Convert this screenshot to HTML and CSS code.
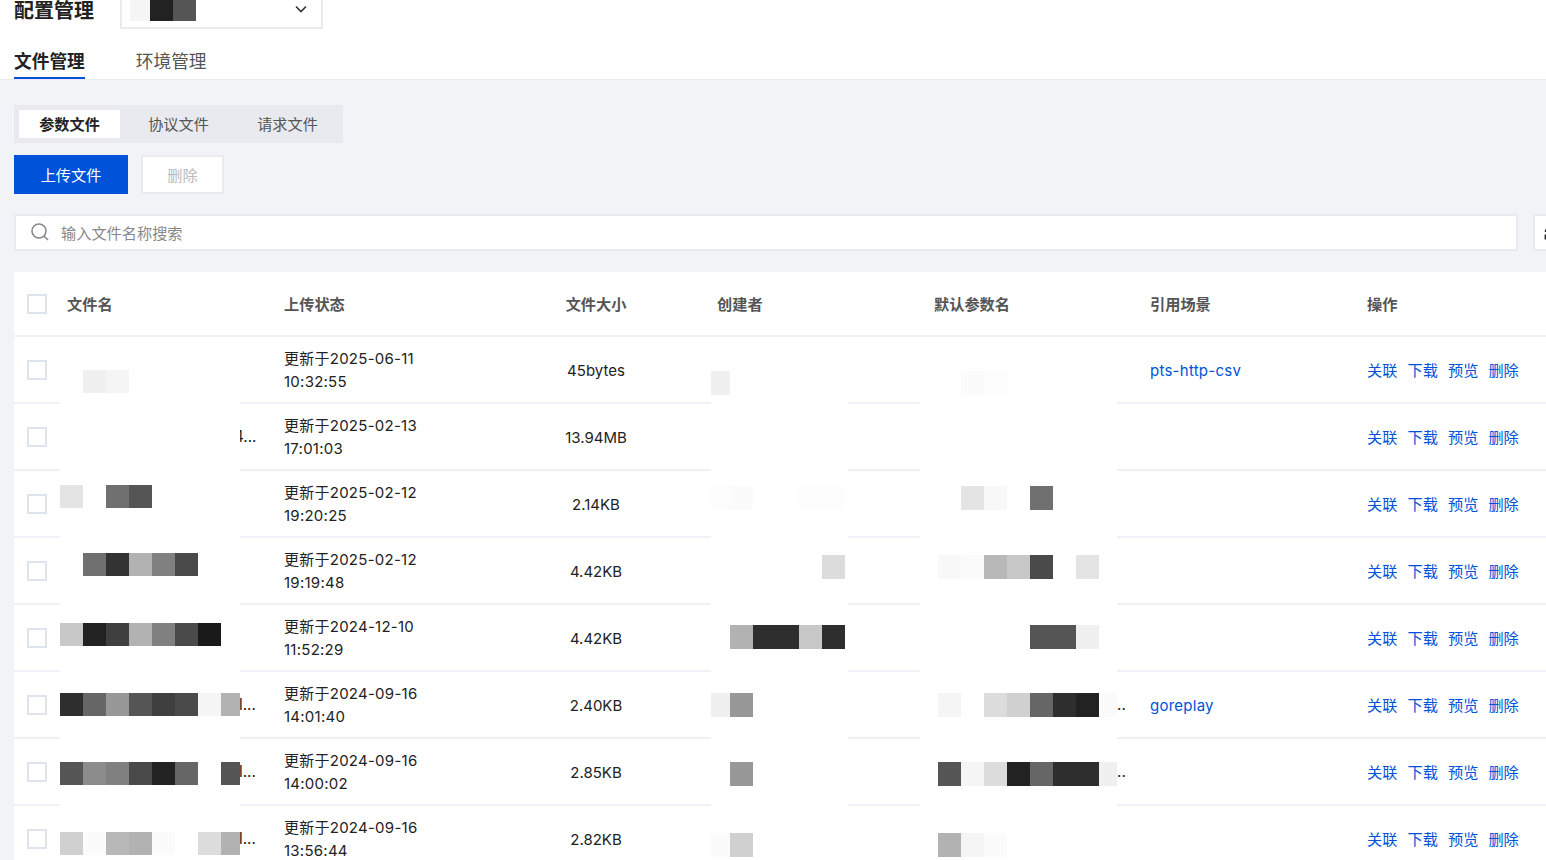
FILE: index.html
```html
<!DOCTYPE html>
<html lang="zh-CN">
<head>
    <meta charset="UTF-8">
    <meta name="viewport" content="width=device-width, initial-scale=1.0">
    <title>配置管理</title>
    <link rel="stylesheet" href="styles.css">
</head>
<body>
    <div class="page-head">
        <div class="topbar">
            <div class="page-title">配置管理</div>
            <div class="project-select">
                <div class="mosaic"><i class="t-f5 px-short"></i><i class="t-22"></i><i class="t-55"></i></div>
                <svg class="chevron" width="12" height="8" viewBox="0 0 12 8"><path d="M1 1.5l5 5 5-5" fill="none" stroke="#333" stroke-width="1.6"/></svg>
            </div>
        </div>
        <div class="tabs">
            <a class="tab active">文件管理</a>
            <a class="tab">环境管理</a>
        </div>
    </div>

    <div class="main">
        <div class="segment">
            <button class="segment-item active">参数文件</button>
            <button class="segment-item">协议文件</button>
            <button class="segment-item">请求文件</button>
        </div>

        <div class="actions">
            <button class="btn btn-primary">上传文件</button>
            <button class="btn btn-disabled" disabled>删除</button>
        </div>

        <div class="search-row">
            <div class="search-box">
                <svg width="20" height="20" viewBox="0 0 20 20"><circle cx="9" cy="9" r="7" fill="none" stroke="#888" stroke-width="1.6"/><path d="M14 14l4 4" stroke="#888" stroke-width="1.6"/></svg>
                <span class="search-placeholder">输入文件名称搜索</span>
            </div>
            <button class="refresh-btn">
                <svg width="16" height="16" viewBox="0 0 16 16"><path d="M2.500 7a5.600 5.600 0 0 1 10-2.600M13.500 9a5.600 5.600 0 0 1-10 2.600" fill="none" stroke="#222" stroke-width="1.8"/><path d="M13.500 1.500v4h-4M2.500 14.500v-4h4" fill="none" stroke="#222" stroke-width="1.8"/></svg>
            </button>
        </div>

        <div class="table">
            <div class="row head-row">
                <div class="cell"><span class="checkbox"></span></div>
                <div class="cell span-2 head-pad">文件名</div>
                <div class="cell head-pad">上传状态</div>
                <div class="cell cell-center">文件大小</div>
                <div class="cell span-2 head-pad-creator">创建者</div>
                <div class="cell span-2 head-pad-wide">默认参数名</div>
                <div class="cell">引用场景</div>
                <div class="cell">操作</div>
            </div>

            <div class="row">
                <div class="cell"><span class="checkbox"></span></div>
                <div class="cell masked"><div class="mosaic top-33"><i></i><i class="t-f0"></i><i class="t-f5"></i></div></div>
                <div class="cell"></div>
                <div class="cell status">更新于2025-06-11<br>10:32:55</div>
                <div class="cell cell-center size">45bytes</div>
                <div class="cell masked"><div class="mosaic mosaic-tall shift-creator top-34"><i class="t-f0"></i></div></div>
                <div class="cell"></div>
                <div class="cell masked"><div class="mosaic mosaic-tall shift-default top-34"><i></i><i></i><i class="t-fb"></i><i class="t-fd"></i></div></div>
                <div class="cell"></div>
                <div class="cell"><a class="link link-name">pts-http-csv</a></div>
                <div class="cell ops"><a class="link">关联</a><a class="link">下载</a><a class="link">预览</a><a class="link">删除</a></div>
            </div>

            <div class="row">
                <div class="cell"><span class="checkbox"></span></div>
                <div class="cell masked"></div>
                <div class="cell"><span class="cut-wide">4...</span></div>
                <div class="cell status">更新于2025-02-13<br>17:01:03</div>
                <div class="cell cell-center size">13.94MB</div>
                <div class="cell masked"></div>
                <div class="cell"></div>
                <div class="cell masked"></div>
                <div class="cell"></div>
                <div class="cell"></div>
                <div class="cell ops"><a class="link">关联</a><a class="link">下载</a><a class="link">预览</a><a class="link">删除</a></div>
            </div>

            <div class="row">
                <div class="cell"><span class="checkbox"></span></div>
                <div class="cell masked"><div class="mosaic top-14"><i class="t-e4"></i><i></i><i class="t-70"></i><i class="t-55"></i></div></div>
                <div class="cell"></div>
                <div class="cell status">更新于2025-02-12<br>19:20:25</div>
                <div class="cell cell-center size">2.14KB</div>
                <div class="cell masked"><div class="mosaic mosaic-tall shift-creator top-15"><i class="t-fd"></i><i class="t-fb"></i><i></i><i></i><i class="t-fd"></i><i class="t-fd"></i></div></div>
                <div class="cell"></div>
                <div class="cell masked"><div class="mosaic mosaic-tall shift-default top-15"><i></i><i></i><i class="t-e4"></i><i class="t-f8"></i><i></i><i class="t-70"></i></div></div>
                <div class="cell"></div>
                <div class="cell"></div>
                <div class="cell ops"><a class="link">关联</a><a class="link">下载</a><a class="link">预览</a><a class="link">删除</a></div>
            </div>

            <div class="row">
                <div class="cell"><span class="checkbox"></span></div>
                <div class="cell masked"><div class="mosaic top-15"><i></i><i class="t-70"></i><i class="t-33"></i><i class="t-b2"></i><i class="t-80"></i><i class="t-4a"></i></div></div>
                <div class="cell"></div>
                <div class="cell status">更新于2025-02-12<br>19:19:48</div>
                <div class="cell cell-center size">4.42KB</div>
                <div class="cell masked"><div class="mosaic mosaic-tall shift-creator top-17"><i></i><i></i><i></i><i></i><i></i><i class="t-dc"></i></div></div>
                <div class="cell"></div>
                <div class="cell masked"><div class="mosaic mosaic-tall shift-default top-17"><i></i><i class="t-f8"></i><i class="t-fb"></i><i class="t-b8"></i><i class="t-c8"></i><i class="t-4a"></i><i></i><i class="t-e4"></i></div></div>
                <div class="cell"></div>
                <div class="cell"></div>
                <div class="cell ops"><a class="link">关联</a><a class="link">下载</a><a class="link">预览</a><a class="link">删除</a></div>
            </div>

            <div class="row">
                <div class="cell"><span class="checkbox"></span></div>
                <div class="cell masked"><div class="mosaic top-18"><i class="t-c8"></i><i class="t-22"></i><i class="t-3f"></i><i class="t-b2"></i><i class="t-80"></i><i class="t-4a"></i><i class="t-1a"></i></div></div>
                <div class="cell"></div>
                <div class="cell status">更新于2024-12-10<br>11:52:29</div>
                <div class="cell cell-center size">4.42KB</div>
                <div class="cell masked"><div class="mosaic mosaic-tall shift-creator top-20"><i></i><i class="t-b2"></i><i class="t-2e"></i><i class="t-2e"></i><i class="t-c8"></i><i class="t-2e"></i></div></div>
                <div class="cell"></div>
                <div class="cell masked"><div class="mosaic mosaic-tall shift-default top-20"><i></i><i></i><i></i><i></i><i></i><i class="t-55"></i><i class="t-55"></i><i class="t-f0"></i></div></div>
                <div class="cell"></div>
                <div class="cell"></div>
                <div class="cell ops"><a class="link">关联</a><a class="link">下载</a><a class="link">预览</a><a class="link">删除</a></div>
            </div>

            <div class="row">
                <div class="cell"><span class="checkbox"></span></div>
                <div class="cell masked"><div class="mosaic top-21"><i class="t-2e"></i><i class="t-66"></i><i class="t-98"></i><i class="t-55"></i><i class="t-3f"></i><i class="t-4a"></i><i class="t-f5"></i><i class="t-b2"></i></div></div>
                <div class="cell"><span class="cut">l...</span></div>
                <div class="cell status">更新于2024-09-16<br>14:01:40</div>
                <div class="cell cell-center size">2.40KB</div>
                <div class="cell masked"><div class="mosaic mosaic-tall shift-creator top-21"><i class="t-f0"></i><i class="t-98"></i></div></div>
                <div class="cell"></div>
                <div class="cell masked"><div class="mosaic mosaic-tall shift-default top-21"><i></i><i class="t-f5"></i><i></i><i class="t-dc"></i><i class="t-d0"></i><i class="t-66"></i><i class="t-2e"></i><i class="t-22"></i><i class="t-fb"></i></div></div>
                <div class="cell">..</div>
                <div class="cell"><a class="link link-name">goreplay</a></div>
                <div class="cell ops"><a class="link">关联</a><a class="link">下载</a><a class="link">预览</a><a class="link">删除</a></div>
            </div>

            <div class="row">
                <div class="cell"><span class="checkbox"></span></div>
                <div class="cell masked"><div class="mosaic top-23"><i class="t-55"></i><i class="t-8c"></i><i class="t-80"></i><i class="t-4a"></i><i class="t-22"></i><i class="t-66"></i><i></i><i class="t-55"></i></div></div>
                <div class="cell"><span class="cut">l...</span></div>
                <div class="cell status">更新于2024-09-16<br>14:00:02</div>
                <div class="cell cell-center size">2.85KB</div>
                <div class="cell masked"><div class="mosaic mosaic-tall shift-creator top-23"><i></i><i class="t-98"></i></div></div>
                <div class="cell"></div>
                <div class="cell masked"><div class="mosaic mosaic-tall shift-default top-23"><i></i><i class="t-55"></i><i class="t-f5"></i><i class="t-dc"></i><i class="t-22"></i><i class="t-66"></i><i class="t-2e"></i><i class="t-2e"></i><i class="t-f0"></i></div></div>
                <div class="cell">..</div>
                <div class="cell"></div>
                <div class="cell ops"><a class="link">关联</a><a class="link">下载</a><a class="link">预览</a><a class="link">删除</a></div>
            </div>

            <div class="row">
                <div class="cell"><span class="checkbox"></span></div>
                <div class="cell masked"><div class="mosaic top-26"><i class="t-d0"></i><i class="t-fb"></i><i class="t-b8"></i><i class="t-b2"></i><i class="t-fb"></i><i></i><i class="t-dc"></i><i class="t-b2"></i></div></div>
                <div class="cell"><span class="cut">l...</span></div>
                <div class="cell status">更新于2024-09-16<br>13:56:44</div>
                <div class="cell cell-center size">2.82KB</div>
                <div class="cell masked"><div class="mosaic mosaic-tall shift-creator top-27"><i class="t-fb"></i><i class="t-d0"></i></div></div>
                <div class="cell"></div>
                <div class="cell masked"><div class="mosaic mosaic-tall shift-default top-27"><i></i><i class="t-b2"></i><i class="t-f5"></i><i class="t-fb"></i></div></div>
                <div class="cell"></div>
                <div class="cell"></div>
                <div class="cell ops"><a class="link">关联</a><a class="link">下载</a><a class="link">预览</a><a class="link">删除</a></div>
            </div>
        </div>
    </div>
</body>
</html>
```

FILE: styles.css
```css
:root {
    --primary-color: #0052d9;
    --page-bg: #f1f3f7;
    --line-color: #eaebf0;
    --row-line: #f0f0f6;
    --dark-text-color: #222;
    --columns: 46px 180px 37px 204px 230px 137px 72px 197px 33px 217px 179px;
}

* {
    box-sizing: border-box;
}

html, body {
    height: 100%;
}

body {
    margin: 0;
    height: 860px;
    overflow: hidden;
    background: var(--page-bg);
    color: var(--dark-text-color);
    font-family: Inter, "Noto Sans CJK SC", sans-serif;
    font-size: 15.2px;
}

button {
    font-family: inherit;
    font-size: 15.2px;
    cursor: pointer;
}

/* top area */
.page-head {
    background: white;
    border-bottom: 1px solid var(--line-color);
}

.topbar {
    display: flex;
    height: 29px;
    padding-left: 14px;
}

.page-title {
    width: 106px;
    font-size: 20px;
    font-weight: 600;
    line-height: 22px;
}

.project-select {
    display: flex;
    justify-content: space-between;
    width: 203px;
    padding: 0 14px 0 8px;
    border: 2px solid var(--line-color);
    border-top: none;
}

.project-select .mosaic {
    height: 21px;
}

.project-select .px-short {
    width: 20px;
}

.chevron {
    margin-top: 5px;
}

.tabs {
    display: flex;
    gap: 51px;
    padding: 21px 0 0 14px;
}

.tab {
    padding-bottom: 3px;
    border-bottom: 2px solid transparent;
    font-size: 17.7px;
    line-height: 24px;
    color: #555;
}

.tab.active {
    font-weight: 600;
    color: var(--dark-text-color);
    border-bottom-color: var(--primary-color);
}

/* main area */
.main {
    padding: 25px 0 0 14px;
}

.segment {
    display: flex;
    width: 329px;
    height: 38px;
    padding: 5px;
    background: #e8eaf0;
}

.segment-item {
    flex: none;
    width: 109px;
    height: 28px;
    padding: 0 0 2px;
    border: none;
    background: none;
    color: #555;
}

.segment-item.active {
    width: 101px;
    margin-right: 4px;
    background: white;
    font-weight: 600;
    color: var(--dark-text-color);
}

.actions {
    display: flex;
    gap: 13px;
    margin-top: 12px;
}

.btn {
    height: 39px;
    border: 2px solid transparent;
    padding: 0 0 2px;
}

.btn-primary {
    width: 114px;
    background: var(--primary-color);
    color: white;
}

.btn-disabled {
    width: 83px;
    background: white;
    border-color: var(--line-color);
    color: #bbb;
    cursor: not-allowed;
}

.search-row {
    display: flex;
    gap: 15px;
    margin-top: 20px;
}

.search-box {
    display: flex;
    align-items: center;
    gap: 11px;
    flex: none;
    width: 1504px;
    height: 37px;
    padding: 0 0 1px 14px;
    background: white;
    border: 2px solid var(--line-color);
}

.search-placeholder {
    color: #888;
    padding-bottom: 1px;
}

.refresh-btn {
    flex: none;
    width: 37px;
    height: 37px;
    padding: 0 0 0 8px;
    text-align: left;
    background: white;
    border: 2px solid var(--line-color);
}

.refresh-btn svg {
    display: block;
}

/* table */
.table {
    margin-top: 21px;
    background: white;
}

.row {
    display: grid;
    grid-template-columns: var(--columns);
    height: 67px;
}

.head-row {
    height: 65px;
    font-weight: 600;
    color: #555;
}

.cell {
    display: flex;
    align-items: center;
    min-width: 0;
    border-bottom: 2px solid var(--row-line);
}

.cell:first-child {
    padding-left: 13px;
}

.head-row .cell {
    padding-bottom: 2px;
}

.head-row .cell:first-child {
    padding-bottom: 0;
}

.span-2 {
    grid-column: span 2;
}

.head-pad {
    padding-left: 7px;
}

.head-pad-creator {
    padding-left: 6px;
}

.head-pad-wide {
    padding-left: 14px;
}

.cell-center {
    justify-content: center;
}

.status {
    padding-left: 7px;
    font-size: 15px;
    line-height: 23px;
    letter-spacing: 0.25px;
}

.size {
    padding-top: 2px;
    font-size: 15px;
}

.checkbox {
    width: 20px;
    height: 20px;
    background: white;
    border: 2px solid #dfe3ee;
}

.link {
    color: var(--primary-color);
    cursor: pointer;
}

.link-name {
    padding-top: 1px;
    font-size: 15px;
    letter-spacing: 0.25px;
}

.ops {
    gap: 10.1px;
    padding-bottom: 2px;
}

/* blurred-out values, these sit on top of the cut off text next to them */
.masked {
    position: relative;
    z-index: 1;
    align-items: flex-start;
    overflow: hidden;
    background: white;
    border-bottom-color: white;
}

.cut {
    margin-left: -1px;
}

.cut-wide {
    margin-left: -6px;
}

.mosaic {
    display: flex;
    height: 23px;
}

.mosaic-tall {
    height: 24px;
}

.mosaic i {
    flex: none;
    width: 23px;
}

.shift-creator {
    margin-left: -4px;
}

.shift-default {
    margin-left: -5px;
}

.top-14 { margin-top: 14px; }
.top-15 { margin-top: 15px; }
.top-17 { margin-top: 17px; }
.top-18 { margin-top: 18px; }
.top-20 { margin-top: 20px; }
.top-21 { margin-top: 21px; }
.top-23 { margin-top: 23px; }
.top-26 { margin-top: 26px; }
.top-27 { margin-top: 27px; }
.top-33 { margin-top: 33px; }
.top-34 { margin-top: 34px; }

.t-1a { background: #1a1a1a; }
.t-22 { background: #222; }
.t-2e { background: #2e2e2e; }
.t-33 { background: #333; }
.t-3f { background: #3f3f3f; }
.t-4a { background: #4a4a4a; }
.t-55 { background: #555; }
.t-66 { background: #666; }
.t-70 { background: #707070; }
.t-80 { background: #808080; }
.t-8c { background: #8c8c8c; }
.t-98 { background: #989898; }
.t-b2 { background: #b2b2b2; }
.t-b8 { background: #b8b8b8; }
.t-c8 { background: #c8c8c8; }
.t-d0 { background: #d0d0d0; }
.t-dc { background: #dcdcdc; }
.t-e4 { background: #e4e4e4; }
.t-f0 { background: #f0f0f0; }
.t-f5 { background: #f5f5f5; }
.t-f8 { background: #f8f8f8; }
.t-fb { background: #fbfbfb; }
.t-fd { background: #fdfdfd; }
```
